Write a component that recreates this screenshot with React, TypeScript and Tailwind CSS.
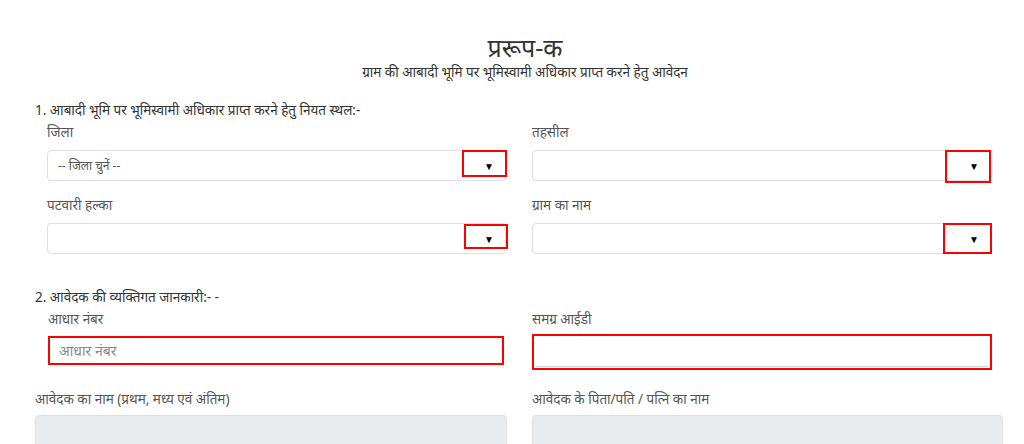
import { ReactNode } from "react";

const font = { fontFamily: '"Noto Sans", "Liberation Sans", sans-serif' };

function Label({ children }: { children: ReactNode }) {
  return <p className="h-[18px] text-[13.5px] leading-[18px] text-[#555]">{children}</p>;
}

function SelectBox({ placeholder, box }: { placeholder?: string; box: string }) {
  return (
    <div className="relative mt-[9px] flex h-[31px] items-center rounded-[4px] border border-[#dcdfe3] bg-white px-[10px] text-[12px] text-[#555]">
      {placeholder}
      <span className="absolute right-[11px] top-1/2 -translate-y-1/2 text-[10px] text-black">▼</span>
      <div className={`absolute border-2 border-[#ff0000] ${box}`} />
    </div>
  );
}

export default function App() {
  return (
    <div style={font} className="min-h-[444px] bg-white text-[#333]">
      <div className="pl-[26px] pt-[33px] text-center">
        <h1 className="text-[25px] leading-[28px] text-[#333]">प्ररूप-क</h1>
        <p className="mt-[2px] text-[13.5px] leading-[18px] text-[#333]">
          ग्राम की आबादी भूमि पर भूमिस्वामी अधिकार प्राप्त करने हेतु आवेदन
        </p>
      </div>

      <p className="mt-[20px] pl-[35px] text-[13.5px] leading-[18px]">
        1. आबादी भूमि पर भूमिस्वामी अधिकार प्राप्त करने हेतु नियत स्थल:-
      </p>

      <div className="mt-[4px] flex gap-[26px] pl-[47px]">
        <div className="w-[459px]">
          <Label>जिला</Label>
          <SelectBox placeholder="-- जिला चुनें --" box="-right-[2px] -top-[1px] h-[27px] w-[45px]" />
        </div>
        <div className="w-[459px]">
          <Label>तहसील</Label>
          <SelectBox box="-right-[1px] -top-[1px] h-[33px] w-[46px]" />
        </div>
      </div>

      <div className="mt-[15px] flex gap-[26px] pl-[47px]">
        <div className="w-[459px]">
          <Label>पटवारी हल्का</Label>
          <SelectBox box="-right-[3px] top-[0px] h-[25px] w-[44px]" />
        </div>
        <div className="w-[459px]">
          <Label>ग्राम का नाम</Label>
          <SelectBox box="-right-[2px] -top-[1px] h-[31px] w-[49px]" />
        </div>
      </div>

      <p className="mt-[34px] pl-[35px] text-[13.5px] leading-[18px]">
        2. आवेदक की व्यक्तिगत जानकारी:- -
      </p>

      <div className="mt-[4px] flex items-start gap-[28px] pl-[48px]">
        <div className="w-[456px]">
          <Label>आधार नंबर</Label>
          <div className="mt-[8px] flex h-[29px] items-center border-2 border-[#ff0000] bg-white px-[9px] text-[14px] text-[#888]">
            आधार नंबर
          </div>
        </div>
        <div className="w-[460px]">
          <Label>समग्र आईडी</Label>
          <div className="mt-[6px] h-[36px] border-2 border-[#ff0000] bg-white p-[1px]">
            <div className="h-full rounded-[3px] border-b border-[#d0d4d9]" />
          </div>
        </div>
      </div>

      <div className="mt-[20px] flex gap-[25px] pl-[35px]">
        <div className="w-[472px]">
          <Label>आवेदक का नाम (प्रथम, मध्य एवं अंतिम)</Label>
          <div className="mt-[7px] h-[40px] rounded-[4px] border border-[#dcdfe3] bg-[#e9ecef]" />
        </div>
        <div className="w-[471px]">
          <Label>आवेदक के पिता/पति / पत्नि का नाम</Label>
          <div className="mt-[7px] h-[40px] rounded-[4px] border border-[#dcdfe3] bg-[#e9ecef]" />
        </div>
      </div>
    </div>
  );
}
